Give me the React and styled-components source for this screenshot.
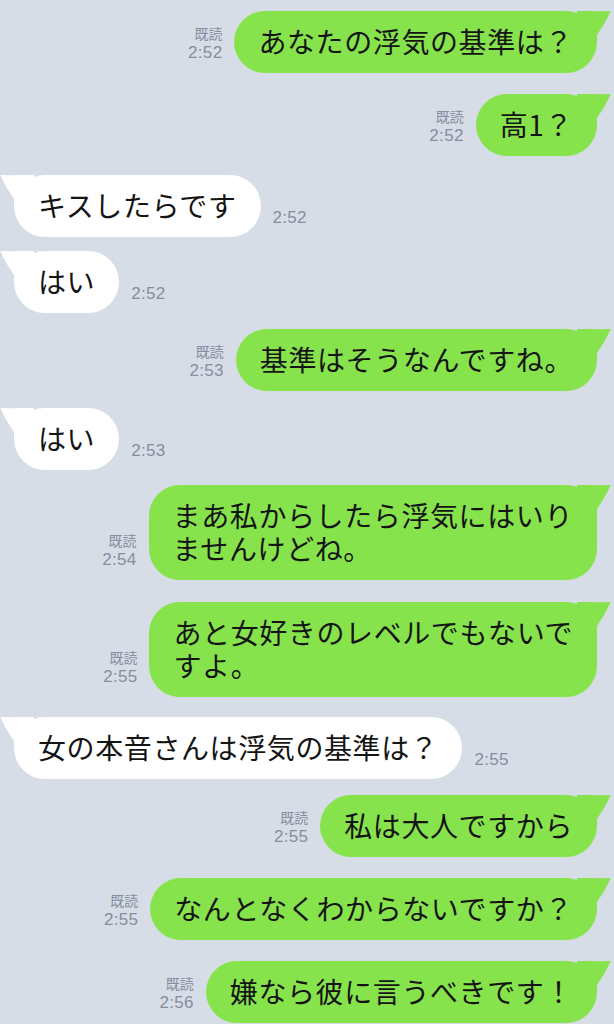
import React from "react";
import styled, { createGlobalStyle } from "styled-components";

const GlobalStyle = createGlobalStyle`
	html, body {
		margin: 0;
		padding: 0;
		background: #d7dde6;
	}
	body {
		font-family: "Noto Sans CJK JP", "Liberation Sans", sans-serif;
	}
`;

const Page = styled.div`
	width: 614px;
	height: 1024px;
	overflow: hidden;
	box-sizing: border-box;
	padding: 11px 17px 0 14px;
	display: flex;
	flex-direction: column;
	background: #d7dde6;
`;

const Row = styled.div`
	display: flex;
	align-items: flex-end;
	justify-content: ${(p) => (p.$out ? "flex-end" : "flex-start")};
	gap: 12px;
	margin-top: ${(p) => p.$space}px;
`;

const Meta = styled.div`
	display: flex;
	flex-direction: column;
	align-items: ${(p) => (p.$out ? "flex-end" : "flex-start")};
	padding-bottom: ${(p) => (p.$out ? 10 : 9)}px;
	font-family: "Liberation Sans", "Noto Sans CJK JP", sans-serif;
	color: #858da0;
`;

const Read = styled.span`
	display: block;
	font-family: "Noto Sans CJK JP", sans-serif;
	font-size: 14px;
	line-height: 20px;
	height: 20px;
	overflow: hidden;
`;

const Time = styled.span`
	display: block;
	font-size: 17px;
	line-height: 20px;
	letter-spacing: 0.3px;
`;

const Bubble = styled.div`
	position: relative;
	background: ${(p) => (p.$out ? "#87e34c" : "#ffffff")};
	color: #141414;
	border-radius: 31px;
	padding: 14px 24px 15px;
	font-size: 28px;
	line-height: 33px;
	letter-spacing: 0.6px;
	white-space: nowrap;
`;

const Tail = styled.svg`
	position: absolute;
	top: 0;
	width: 34px;
	height: 30px;
	${(p) =>
		p.$out
			? "right: -14px;"
			: "left: -14px; transform: scaleX(-1);"}
`;

const messages = [
	{ out: true, lines: ["あなたの浮気の基準は？"], time: "2:52", space: 0 },
	{ out: true, lines: ["高1？"], time: "2:52", space: 21 },
	{ out: false, lines: ["キスしたらです"], time: "2:52", space: 19 },
	{ out: false, lines: ["はい"], time: "2:52", space: 14 },
	{ out: true, lines: ["基準はそうなんですね。"], time: "2:53", space: 16 },
	{ out: false, lines: ["はい"], time: "2:53", space: 17 },
	{
		out: true,
		lines: ["まあ私からしたら浮気にはいり", "ませんけどね。"],
		time: "2:54",
		space: 15
	},
	{
		out: true,
		lines: ["あと女好きのレベルでもないで", "すよ。"],
		time: "2:55",
		space: 22
	},
	{ out: false, lines: ["女の本音さんは浮気の基準は？"], time: "2:55", space: 20 },
	{ out: true, lines: ["私は大人ですから"], time: "2:55", space: 16 },
	{ out: true, lines: ["なんとなくわからないですか？"], time: "2:55", space: 21 },
	{ out: true, lines: ["嫌なら彼に言うべきです！"], time: "2:56", space: 21 }
];

const BubbleTail = ({ out }) => (
	<Tail $out={out} viewBox="0 0 34 30">
		<path
			d="M0 0 L14 0 C22 0 28 1 34 -1 C31 7 26 15 20 24 L20 30 L0 30 Z"
			fill={out ? "#87e34c" : "#ffffff"}
		/>
	</Tail>
);

const Message = ({ m }) => {
	const meta = (
		<Meta $out={m.out}>
			{m.out && <Read>既読</Read>}
			<Time>{m.time}</Time>
		</Meta>
	);
	const bubble = (
		<Bubble $out={m.out}>
			<BubbleTail out={m.out} />
			{m.lines.map((l, j) => (
				<div key={j}>{l}</div>
			))}
		</Bubble>
	);
	return (
		<Row $out={m.out} $space={m.space}>
			{m.out ? meta : bubble}
			{m.out ? bubble : meta}
		</Row>
	);
};

const App = () => (
	<>
		<GlobalStyle />
		<Page>
			{messages.map((m, i) => (
				<Message key={i} m={m} />
			))}
		</Page>
	</>
);

export default App;
